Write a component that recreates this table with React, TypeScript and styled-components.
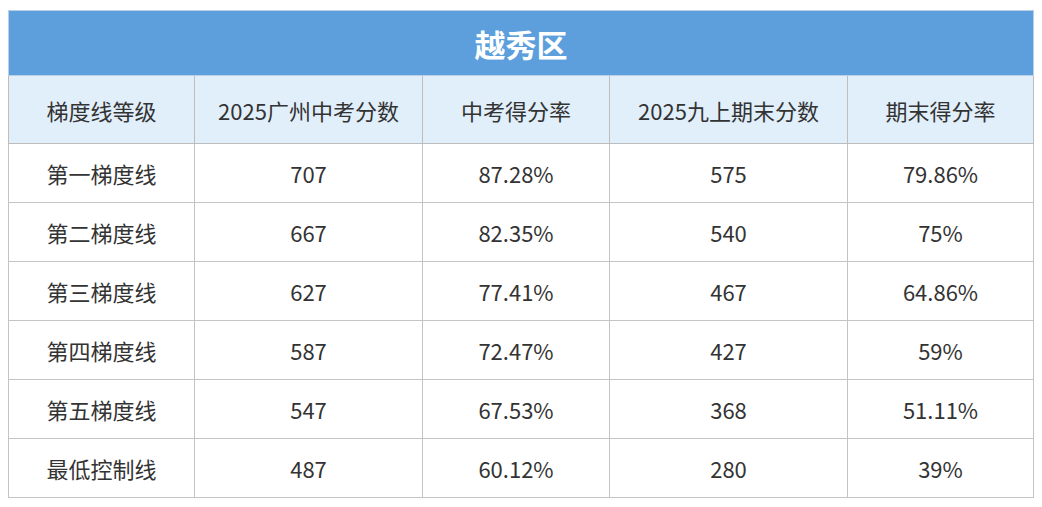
import React from "react";
import styled, { createGlobalStyle } from "styled-components";

const Global = createGlobalStyle`
  html, body { margin: 0; padding: 0; background: #ffffff; }
  body { font-family: "Noto Sans CJK SC", "Noto Sans", sans-serif; }
`;

const Page = styled.div`
  padding: 10px 8px 0 8px;
`;

const Table = styled.table`
  width: 1025px;
  border-collapse: collapse;
  table-layout: fixed;
  color: #333333;
  font-size: 22px;
`;

const TitleCell = styled.th`
  height: 64px;
  padding: 0;
  background: #5c9fdc;
  color: #ffffff;
  font-size: 31px;
  font-weight: 700;
  text-align: center;
  border: 1px solid #b9cfe6;
`;

const HeadCell = styled.th`
  height: 67px;
  padding: 0;
  background: #e1effb;
  font-weight: 400;
  text-align: center;
  border: 1px solid #bdbdbd;
`;

const Cell = styled.td`
  height: 58px;
  padding: 0;
  text-align: center;
  border: 1px solid #c4c4c4;
  background: #ffffff;
`;

const widths = [186, 228, 187, 238, 186];
const headers = ["梯度线等级", "2025广州中考分数", "中考得分率", "2025九上期末分数", "期末得分率"];
const rows = [
  ["第一梯度线", "707", "87.28%", "575", "79.86%"],
  ["第二梯度线", "667", "82.35%", "540", "75%"],
  ["第三梯度线", "627", "77.41%", "467", "64.86%"],
  ["第四梯度线", "587", "72.47%", "427", "59%"],
  ["第五梯度线", "547", "67.53%", "368", "51.11%"],
  ["最低控制线", "487", "60.12%", "280", "39%"],
];

export default function App() {
  return (
    <Page>
      <Global />
      <Table>
        <colgroup>
          {widths.map((w, i) => (
            <col key={i} style={{ width: w }} />
          ))}
        </colgroup>
        <thead>
          <tr>
            <TitleCell colSpan={5}>越秀区</TitleCell>
          </tr>
          <tr>
            {headers.map((h) => (
              <HeadCell key={h}>{h}</HeadCell>
            ))}
          </tr>
        </thead>
        <tbody>
          {rows.map((r) => (
            <tr key={r[0]}>
              {r.map((c, i) => (
                <Cell key={i}>{c}</Cell>
              ))}
            </tr>
          ))}
        </tbody>
      </Table>
    </Page>
  );
}
